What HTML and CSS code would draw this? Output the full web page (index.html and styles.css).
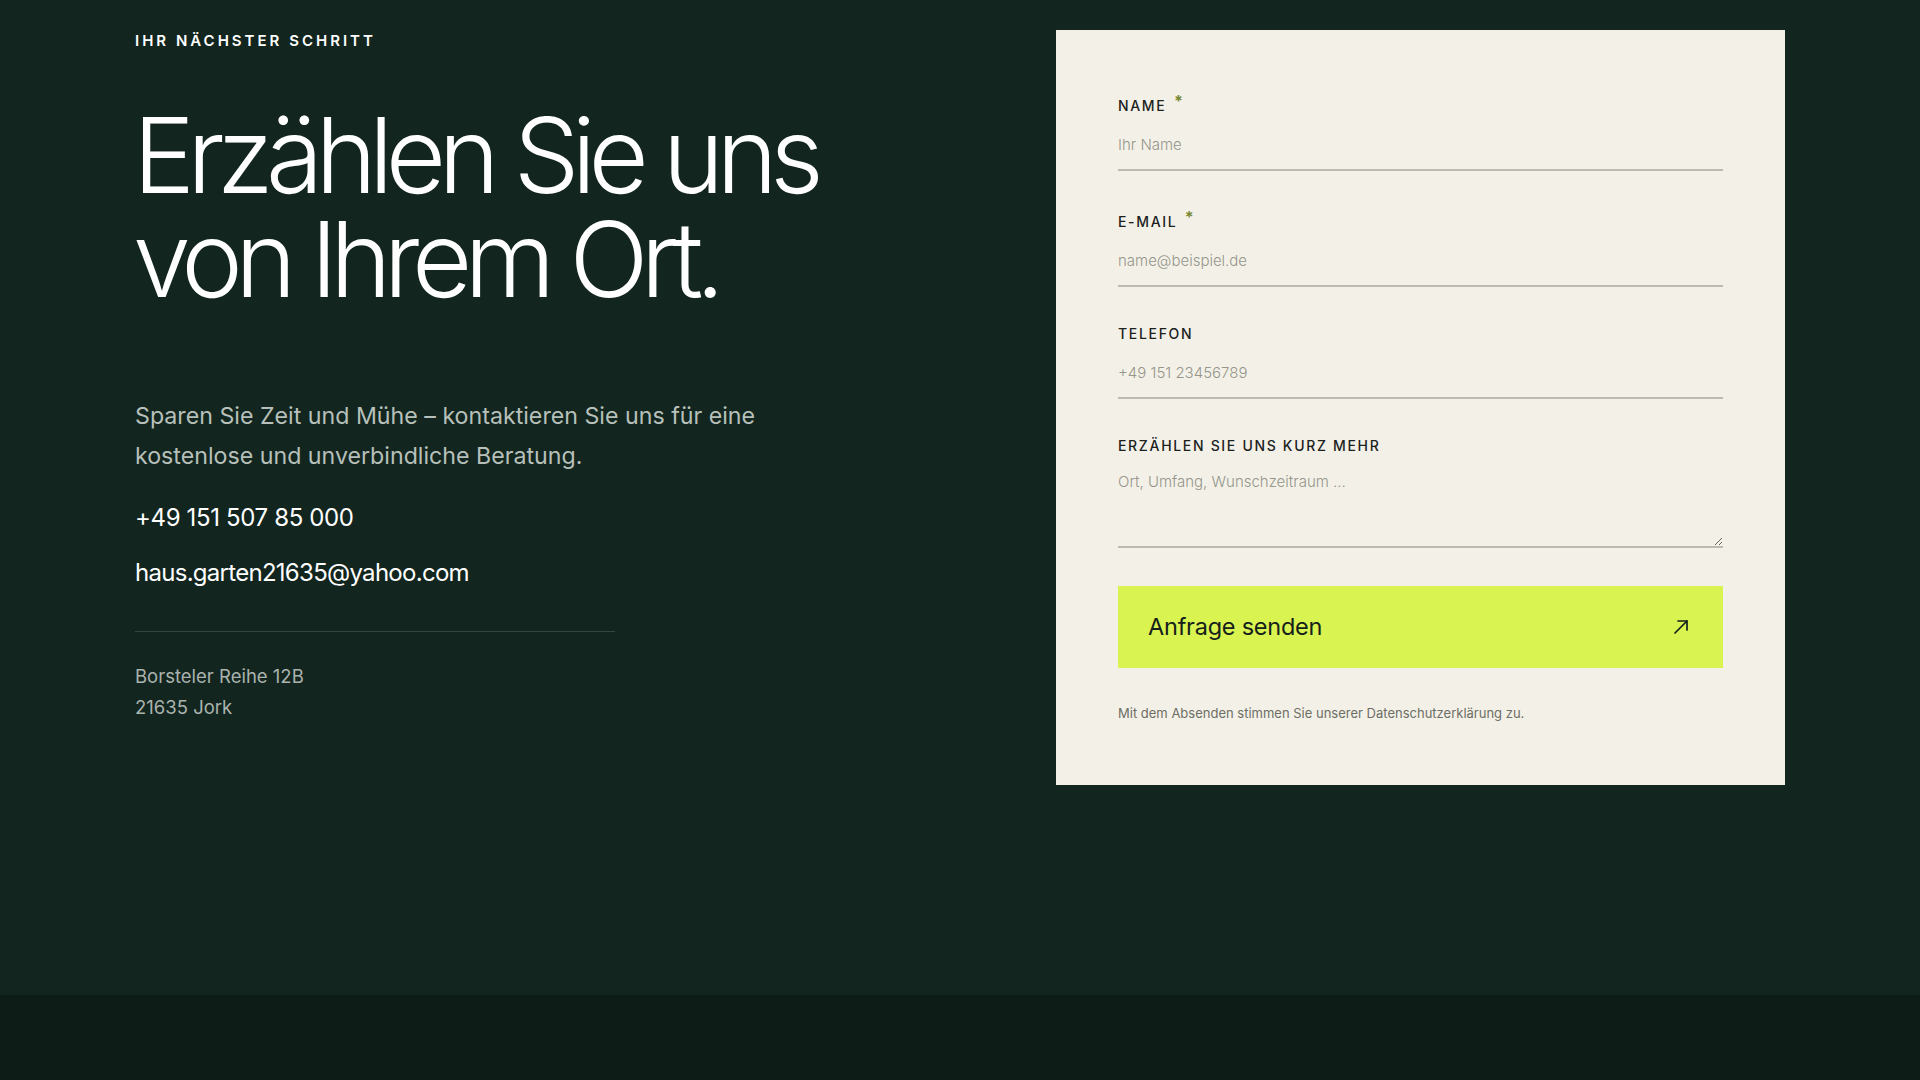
FILE: index.html
```html
<!DOCTYPE html>
<html lang="de">
<head>
<meta charset="utf-8">
<title>Kontakt</title>
<link rel="stylesheet" href="styles.css">
</head>
<body>
<section class="contact">
  <div class="container">
    <div class="intro">
      <p class="eyebrow">IHR NÄCHSTER SCHRITT</p>
      <h1 class="headline">Erzählen Sie uns<br>von Ihrem Ort.</h1>
      <p class="lead">Sparen Sie Zeit und Mühe – kontaktieren Sie uns für eine kostenlose und unverbindliche Beratung.</p>
      <a class="contact-link" href="#">+49 151 507 85 000</a>
      <a class="contact-link" href="#">haus.garten21635@yahoo.com</a>
      <hr class="divider">
      <address class="address">Borsteler Reihe 12B<br>21635 Jork</address>
    </div>
    <form class="card">
      <div class="field">
        <label class="label label-req">NAME <span class="req">*</span></label>
        <input class="input" type="text" placeholder="Ihr Name">
      </div>
      <div class="field">
        <label class="label label-req">E-MAIL <span class="req">*</span></label>
        <input class="input" type="email" placeholder="name@beispiel.de">
      </div>
      <div class="field">
        <label class="label">TELEFON</label>
        <input class="input" type="tel" placeholder="+49 151 23456789">
      </div>
      <div class="field">
        <label class="label">ERZÄHLEN SIE UNS KURZ MEHR</label>
        <textarea class="input textarea" placeholder="Ort, Umfang, Wunschzeitraum ..."></textarea>
      </div>
      <button class="submit" type="button">
        <span>Anfrage senden</span>
        <svg class="arrow" width="20" height="20" viewBox="0 0 20 20" fill="none" stroke="currentColor" stroke-width="1.7" stroke-linecap="round" stroke-linejoin="round"><path d="M4 16 L16 4"/><path d="M7 4 H16 V13"/></svg>
      </button>
      <p class="note">Mit dem Absenden stimmen Sie unserer Datenschutzerklärung zu.</p>
    </form>
  </div>
</section>
<footer class="footer"></footer>
</body>
</html>
```
FILE: styles.css
```css
* { box-sizing: border-box; }
html, body { margin: 0; padding: 0; }
body {
  background: #0d1c17;
  font-family: Inter, "Noto Sans", sans-serif;
  color: #ffffff;
}
.contact {
  background: #12251f;
  min-height: 995px;
  padding-top: 30px;
}
.container {
  width: 1650px;
  margin: 0 auto;
  display: grid;
  grid-template-columns: 1fr 729px;
  align-items: start;
}
.intro { display: flex; flex-direction: column; align-items: flex-start; }
.eyebrow {
  margin: 0;
  font-size: 15px;
  line-height: 22px;
  font-weight: 600;
  letter-spacing: 0.2em;
  color: #ffffff;
}
.headline {
  margin: 51px 0 0 -2px;
  font-size: 104px;
  line-height: 104px;
  font-weight: 300;
  letter-spacing: -0.073em;
  color: #ffffff;
}
.lead {
  margin: 85px 0 0;
  max-width: 660px;
  font-size: 23.2px;
  line-height: 40px;
  font-weight: 400;
  color: #b7c0ba;
}
.contact-link {
  font-size: 24px;
  line-height: 32px;
  font-weight: 400;
  color: #ffffff;
  text-decoration: none;
  letter-spacing: -0.025em;
}
.contact-link:first-of-type { margin-top: 26px; letter-spacing: -0.015em; }
.contact-link + .contact-link { margin-top: 23px; letter-spacing: -0.03em; }
.divider {
  width: 480px;
  margin: 42px 0 0;
  border: 0;
  border-top: 1px solid #34463f;
}
.address {
  margin-top: 29px;
  font-style: normal;
  font-size: 18.5px;
  line-height: 31px;
  font-weight: 400;
  color: #aab3ad;
}
.card {
  background: #f3f1e7;
  padding: 60px 62px 62px;
  display: flex;
  flex-direction: column;
  gap: 35px;
  color: #1b211d;
}
.field { display: flex; flex-direction: column; }
.label {
  font-size: 14px;
  line-height: 24px;
  font-weight: 500;
  letter-spacing: 0.12em;
  color: #1b211d;
}
.label-req { padding-top: 4px; }
.req {
  color: #788834;
  margin-left: 2px;
  font-size: 16px;
  font-weight: 700;
  vertical-align: 4px;
  line-height: 0;
}
.input {
  margin-top: 8px;
  padding: 8px 0 13px;
  border: 0;
  border-bottom: 2px solid #bdbbb1;
  background: transparent;
  font-family: Inter, "Noto Sans", sans-serif;
  font-size: 15px;
  line-height: 22px;
  color: #1b211d;
  outline: none;
}
.input::placeholder { color: #95958c; font-weight: 300; }
.textarea {
  margin-top: 6px;
  padding-top: 7px;
  height: 84px;
  resize: vertical;
}
.submit {
  margin-top: 2.5px;
  height: 82px;
  border: 0;
  background: #d9f351;
  display: flex;
  align-items: center;
  justify-content: space-between;
  padding: 0 32px 0 30px;
  font-family: Inter, "Noto Sans", sans-serif;
  font-size: 23.5px;
  font-weight: 400;
  letter-spacing: -0.01em;
  color: #15201a;
  cursor: pointer;
}
.arrow { color: #15201a; }
.note {
  margin: 0.5px 0 0;
  font-size: 13px;
  line-height: 20px;
  font-weight: 400;
  color: #6d6e66;
}
.footer {
  background: #0d1c17;
  height: 85px;
}
```
